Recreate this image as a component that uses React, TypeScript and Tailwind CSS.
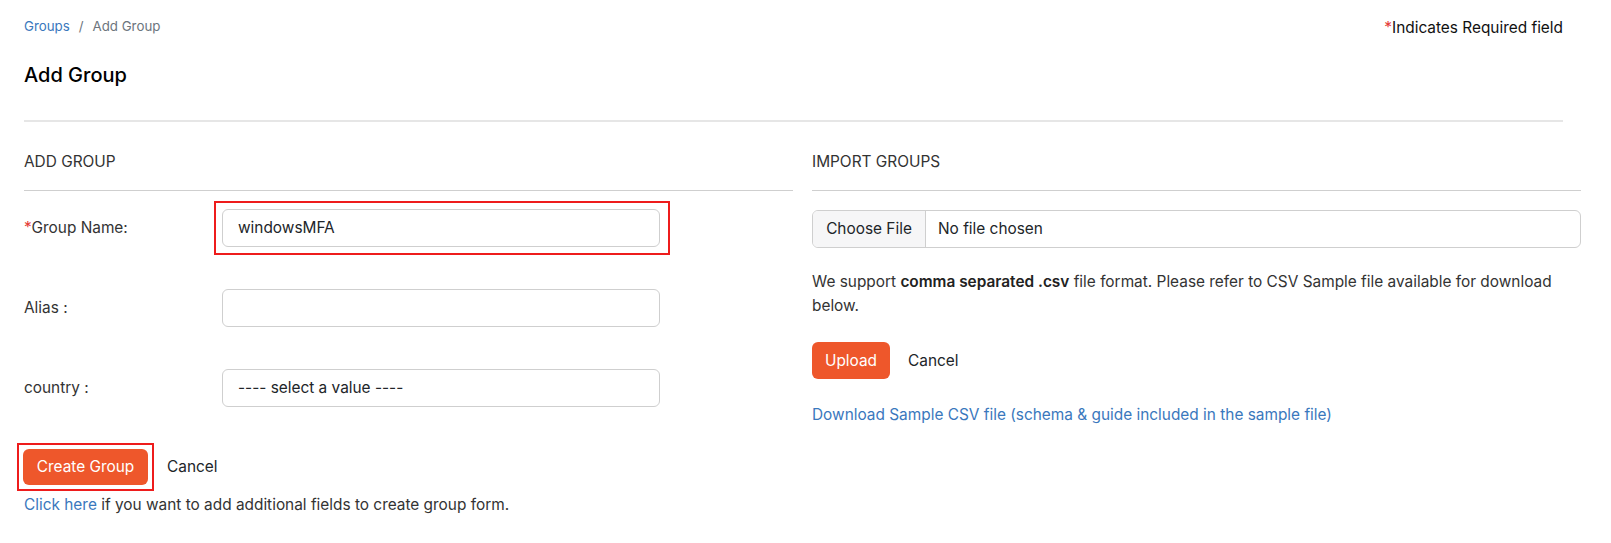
import React from "react";

export default function App() {
  return (
    <div className="w-[1611px] h-[543px] bg-white text-[15.4px] text-[#212529] overflow-hidden" style={{ fontFamily: "Inter, 'Noto Sans', sans-serif" }}>
      <div className="pl-[24px] pr-[48px]">
        <div className="flex justify-between items-start pt-[16px]">
          <div className="text-[13.3px] leading-[20px] flex items-center gap-[9px]">
            <span className="text-[#3a78bd]">Groups</span>
            <span className="text-[#6c757d]">/</span>
            <span className="text-[#6c757d]">Add Group</span>
          </div>
          <div className="leading-[22px] mt-[1px] text-[#111]">
            <span className="text-[#e53935]">*</span>Indicates Required field
          </div>
        </div>
        <h1 className="text-[20px] font-medium text-black mt-[22px] leading-[28px]">Add Group</h1>
        <div className="h-[2px] bg-[#e6e6e6] mt-[31px]" />
      </div>
      <div className="flex pl-[24px] gap-[19px] pr-[30px] mt-[29px]">
        <div className="w-[769px]">
          <div className="text-[#333] leading-[22px]">ADD GROUP</div>
          <div className="h-px bg-[#cfcfcf] mt-[17px]" />
          <div className="mt-[10px]">
            <div className="flex items-center">
              <div className="w-[190px] text-[#333]"><span className="text-[#e53935]">*</span>Group Name:</div>
              <div className="border-2 border-[#ee1c1c] pl-[6px] pr-[8px] py-[6px] w-[456px]">
                <div className="h-[38px] border border-[#cfcfcf] rounded-[6px] flex items-center px-[15px] text-[#212529]">windowsMFA</div>
              </div>
            </div>
            <div className="flex items-center h-[38px] mt-[34px]">
              <div className="w-[198px] text-[#333]">Alias :</div>
              <div className="h-[38px] w-[438px] border border-[#cfcfcf] rounded-[6px]" />
            </div>
            <div className="flex items-center h-[38px] mt-[42px]">
              <div className="w-[198px] text-[#333]">country :</div>
              <div className="h-[38px] w-[438px] border border-[#cfcfcf] rounded-[6px] flex items-center px-[15px] text-[#212529]">---- select a value ----</div>
            </div>
          </div>
          <div className="flex items-center mt-[36px] -ml-[7px]">
            <div className="border-2 border-[#ee1c1c] p-[4px]">
              <div className="h-[36px] w-[125px] bg-[#ee572b] rounded-[6px] text-white flex items-center justify-center">Create Group</div>
            </div>
            <span className="ml-[13px] text-[#212529]">Cancel</span>
          </div>
          <div className="mt-[3px] leading-[22px] text-[#333]"><span className="text-[#3a78bd]">Click here</span> if you want to add additional fields to create group form.</div>
        </div>
        <div className="w-[769px]">
          <div className="text-[#333] leading-[22px]">IMPORT GROUPS</div>
          <div className="h-px bg-[#cfcfcf] mt-[17px]" />
          <div className="mt-[19px] h-[38px] border border-[#cfcfcf] rounded-[6px] flex overflow-hidden">
            <div className="w-[113px] bg-[#f6f6f7] border-r border-[#cfcfcf] flex items-center justify-center text-[#212529]">Choose File</div>
            <div className="flex items-center pl-[12px] text-[#212529]">No file chosen</div>
          </div>
          <p className="mt-[22px] leading-[24px] text-[#333]">
            We support <b className="font-semibold text-[#222]">comma separated .csv</b> file format. Please refer to CSV Sample file available for download below.
          </p>
          <div className="flex items-center mt-[24px]">
            <div className="h-[37px] w-[78px] bg-[#ee572b] rounded-[6px] text-white flex items-center justify-center">Upload</div>
            <span className="ml-[18px] text-[#212529]">Cancel</span>
          </div>
          <div className="mt-[25px] leading-[22px] text-[#3a78bd]">Download Sample CSV file (schema &amp; guide included in the sample file)</div>
        </div>
      </div>
    </div>
  );
}
